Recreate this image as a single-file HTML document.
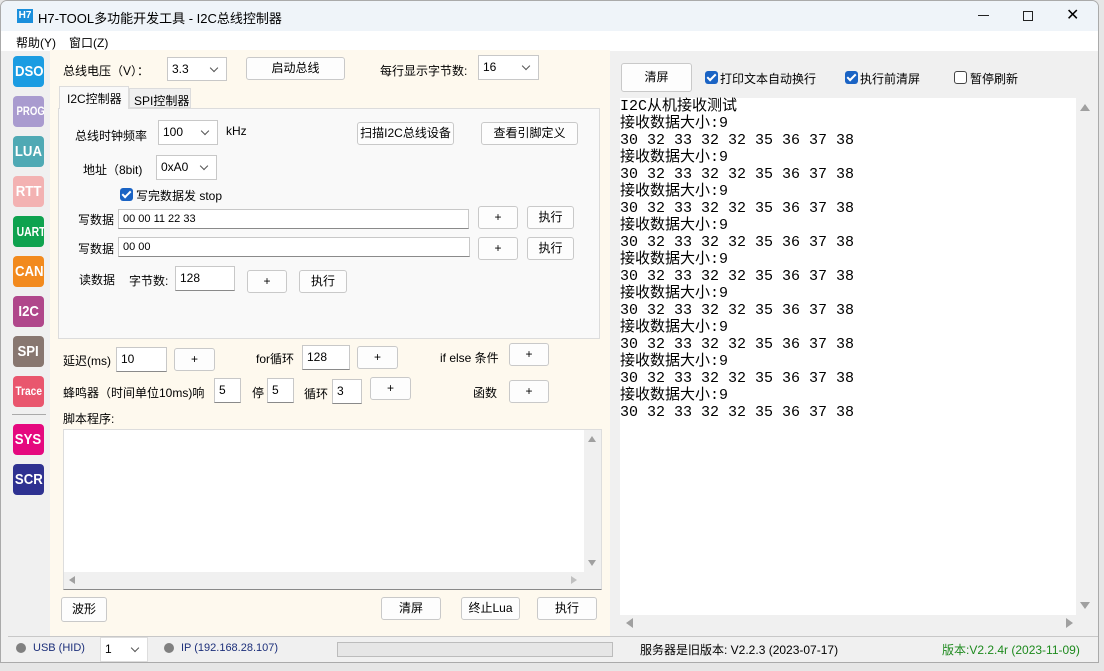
<!DOCTYPE html>
<html><head><meta charset="utf-8"><style>
*{box-sizing:border-box;margin:0;padding:0}
body{width:1104px;height:671px;background:#e6e6e6;font-family:"Liberation Sans","Noto Sans CJK SC",sans-serif;font-size:12px;color:#000;position:relative;overflow:hidden}
.a{position:absolute}
.btn{position:absolute;background:#fdfdfd;border:1px solid #c9c9c9;border-radius:3px;text-align:center;font-size:12px}
.inp{position:absolute;background:#fff;border:1px solid #c8c8c8;border-bottom:1px solid #8a8a8a;padding-left:4px;font-size:12px}
.cb{position:absolute;background:#fff;border:1px solid #c8c8c8;padding-left:4px;font-size:12px}
.cb:after{content:"";position:absolute;right:9px;top:7px;width:5px;height:5px;border-right:1px solid #555;border-bottom:1px solid #555;transform:rotate(45deg)}
.ic{position:absolute;left:13px;width:31px;height:31px;border-radius:4px;color:#fff;font-weight:bold;text-align:center;line-height:31px;font-size:15px;font-family:"Liberation Sans Narrow","Liberation Sans",sans-serif;overflow:hidden}
.ic span{display:inline-block;transform:scaleX(0.88)}
.chk{position:absolute;width:13px;height:13px;border-radius:3px;background:#1a63c4}
.chk:after{content:"";position:absolute;left:4px;top:1px;width:3px;height:7px;border-right:2px solid #fff;border-bottom:2px solid #fff;transform:rotate(45deg)}
.out{position:absolute;left:620px;top:98px;font-family:"Liberation Mono","Noto Sans CJK SC",monospace;font-size:15px;line-height:17px;white-space:pre}
</style></head><body>
<div class="a" style="left:0;top:0;width:1099px;height:663px;background:#f0f0f0;border:1px solid #aaa;border-radius:7px 7px 0 0;overflow:hidden">
 <div class="a" style="left:0;top:0;width:1099px;height:30px;background:#eff4f9"></div>
 <div class="a" style="left:16px;top:8px;width:16px;height:14px;background:#1a8fdc;color:#fff;font-size:10px;font-weight:bold;line-height:14px;text-align:center">H7</div>
 <div class="a" style="left:37px;top:7px;font-size:13px">H7-TOOL多功能开发工具 - I2C总线控制器</div>
 <div class="a" style="left:977px;top:14px;width:11px;height:1px;background:#222"></div>
 <div class="a" style="left:1022px;top:10px;width:10px;height:10px;border:1px solid #222"></div>
 <div class="a" style="left:1065px;top:8px;font-size:16px;line-height:14px">✕</div>
 <div class="a" style="left:0;top:30px;width:1099px;height:20px;background:#fff"></div>
 <div class="a" style="left:15px;top:33px">帮助(Y)</div>
 <div class="a" style="left:68px;top:33px">窗口(Z)</div>
</div>
<div class="ic" style="top:56px;background:#1b9ce2"><span>DSO</span></div>
<div class="ic" style="top:96px;background:#a99bcf;font-size:12px"><span style="transform:scaleX(0.8)">PROG</span></div>
<div class="ic" style="top:136px;background:#4fa9b4"><span>LUA</span></div>
<div class="ic" style="top:176px;background:#f3b2b2"><span>RTT</span></div>
<div class="ic" style="top:216px;background:#0ea24f;font-size:13px"><span style="transform:scaleX(0.8)">UART</span></div>
<div class="ic" style="top:256px;background:#f28a1e"><span>CAN</span></div>
<div class="ic" style="top:296px;background:#b0478b"><span>I2C</span></div>
<div class="ic" style="top:336px;background:#887770"><span>SPI</span></div>
<div class="ic" style="top:376px;background:#e9566e;font-size:12px"><span style="transform:scaleX(0.85)">Trace</span></div>
<div class="a" style="left:12px;top:414px;width:34px;height:1px;background:#aaa"></div>
<div class="ic" style="top:424px;background:#e5087f"><span>SYS</span></div>
<div class="ic" style="top:464px;background:#2e3191"><span>SCR</span></div>
<div class="a" style="left:50px;top:50px;width:560px;height:586px;background:#fef9ee"></div>
<div class="a" style="left:63px;top:62px">总线电压（V）：</div>
<div class="cb" style="left:167px;top:57px;width:60px;height:24px;line-height:22px">3.3</div>
<div class="btn" style="left:246px;top:57px;width:99px;height:23px;line-height:21px">启动总线</div>
<div class="a" style="left:380px;top:62px">每行显示字节数:</div>
<div class="cb" style="left:478px;top:55px;width:61px;height:25px;line-height:23px">16</div>
<div class="a" style="left:58px;top:108px;width:542px;height:231px;background:#f9f9f9;border:1px solid #dcdcdc"></div>
<div class="a" style="left:59px;top:86px;width:70px;height:23px;background:#f9f9f9;border:1px solid #dcdcdc;border-bottom:none;padding:3px 0 0 7px">I2C控制器</div>
<div class="a" style="left:129px;top:88px;width:62px;height:20px;background:#f0f0f0;border:1px solid #dcdcdc;padding:3px 0 0 4px">SPI控制器</div>
<div class="a" style="left:75px;top:127px">总线时钟频率</div>
<div class="cb" style="left:158px;top:120px;width:60px;height:25px;line-height:23px">100</div>
<div class="a" style="left:226px;top:124px">kHz</div>
<div class="btn" style="left:357px;top:122px;width:97px;height:23px;line-height:21px">扫描I2C总线设备</div>
<div class="btn" style="left:481px;top:122px;width:97px;height:23px;line-height:21px">查看引脚定义</div>
<div class="a" style="left:83px;top:161px">地址（8bit)</div>
<div class="cb" style="left:156px;top:155px;width:61px;height:25px;line-height:23px">0xA0</div>
<div class="chk" style="left:120px;top:188px"></div>
<div class="a" style="left:136px;top:187px">写完数据发 stop</div>
<div class="a" style="left:78px;top:211px">写数据</div>
<div class="inp" style="left:118px;top:209px;width:351px;height:20px;line-height:18px;font-size:11px">00 00 11 22 33</div>
<div class="btn" style="left:478px;top:206px;width:40px;height:23px;line-height:21px">+</div>
<div class="btn" style="left:527px;top:206px;width:47px;height:23px;line-height:21px">执行</div>
<div class="a" style="left:78px;top:240px">写数据</div>
<div class="inp" style="left:118px;top:237px;width:352px;height:20px;line-height:18px;font-size:11px">00 00</div>
<div class="btn" style="left:478px;top:237px;width:40px;height:23px;line-height:21px">+</div>
<div class="btn" style="left:527px;top:237px;width:47px;height:23px;line-height:21px">执行</div>
<div class="a" style="left:79px;top:271px">读数据</div>
<div class="a" style="left:129px;top:272px">字节数:</div>
<div class="inp" style="left:175px;top:266px;width:60px;height:25px;line-height:22px">128</div>
<div class="btn" style="left:247px;top:270px;width:40px;height:23px;line-height:21px">+</div>
<div class="btn" style="left:299px;top:270px;width:48px;height:23px;line-height:21px">执行</div>
<div class="a" style="left:63px;top:352px">延迟(ms)</div>
<div class="inp" style="left:116px;top:347px;width:51px;height:25px;line-height:22px">10</div>
<div class="btn" style="left:174px;top:348px;width:41px;height:23px;line-height:21px">+</div>
<div class="a" style="left:256px;top:350px">for循环</div>
<div class="inp" style="left:302px;top:345px;width:48px;height:25px;line-height:22px">128</div>
<div class="btn" style="left:357px;top:346px;width:41px;height:23px;line-height:21px">+</div>
<div class="a" style="left:440px;top:349px">if else 条件</div>
<div class="btn" style="left:509px;top:343px;width:40px;height:23px;line-height:21px">+</div>
<div class="a" style="left:63px;top:384px">蜂鸣器（时间单位10ms)响</div>
<div class="inp" style="left:214px;top:378px;width:27px;height:25px;line-height:22px">5</div>
<div class="a" style="left:252px;top:384px">停</div>
<div class="inp" style="left:267px;top:378px;width:27px;height:25px;line-height:22px">5</div>
<div class="a" style="left:304px;top:385px">循环</div>
<div class="inp" style="left:332px;top:379px;width:30px;height:25px;line-height:22px">3</div>
<div class="btn" style="left:370px;top:377px;width:41px;height:23px;line-height:21px">+</div>
<div class="a" style="left:473px;top:384px">函数</div>
<div class="btn" style="left:509px;top:380px;width:40px;height:23px;line-height:21px">+</div>
<div class="a" style="left:63px;top:410px">脚本程序:</div>
<div class="a" style="left:63px;top:429px;width:539px;height:161px;background:#fff;border:1px solid #ddd;border-bottom:1px solid #888">
 <div class="a" style="right:0;top:0;width:17px;height:142px;background:#f0f0f0"></div>
 <div class="a" style="left:0;bottom:0;width:537px;height:17px;background:#f0f0f0"></div>
 <div class="a" style="right:5px;top:6px;width:0;height:0;border:4px solid transparent;border-bottom:6px solid #a0a0a0;border-top:none"></div>
 <div class="a" style="right:5px;top:130px;width:0;height:0;border:4px solid transparent;border-top:6px solid #a0a0a0;border-bottom:none"></div>
 <div class="a" style="left:5px;bottom:5px;width:0;height:0;border:4px solid transparent;border-right:6px solid #a0a0a0;border-left:none"></div>
 <div class="a" style="right:24px;bottom:5px;width:0;height:0;border:4px solid transparent;border-left:6px solid #c0c0c0;border-right:none"></div>
</div>
<div class="btn" style="left:61px;top:597px;width:46px;height:25px;line-height:23px">波形</div>
<div class="btn" style="left:381px;top:597px;width:60px;height:23px;line-height:21px">清屏</div>
<div class="btn" style="left:461px;top:597px;width:59px;height:23px;line-height:21px">终止Lua</div>
<div class="btn" style="left:537px;top:597px;width:60px;height:23px;line-height:21px">执行</div>
<div class="btn" style="left:621px;top:63px;width:71px;height:29px;line-height:27px">清屏</div>
<div class="chk" style="left:705px;top:71px"></div>
<div class="a" style="left:720px;top:70px">打印文本自动换行</div>
<div class="chk" style="left:845px;top:71px"></div>
<div class="a" style="left:860px;top:70px">执行前清屏</div>
<div class="a" style="left:954px;top:71px;width:13px;height:13px;border:1px solid #444;border-radius:3px;background:#fff"></div>
<div class="a" style="left:970px;top:70px">暂停刷新</div>
<div class="a" style="left:620px;top:98px;width:456px;height:517px;background:#fff"></div>
<div class="a" style="left:1080px;top:104px;width:0;height:0;border:5px solid transparent;border-bottom:7px solid #a0a0a0;border-top:none"></div>
<div class="a" style="left:1080px;top:602px;width:0;height:0;border:5px solid transparent;border-top:7px solid #a0a0a0;border-bottom:none"></div>
<div class="a" style="left:626px;top:618px;width:0;height:0;border:5px solid transparent;border-right:7px solid #a0a0a0;border-left:none"></div>
<div class="a" style="left:1066px;top:618px;width:0;height:0;border:5px solid transparent;border-left:7px solid #a0a0a0;border-right:none"></div>
<div class="out">I2C从机接收测试
接收数据大小:9
30 32 33 32 32 35 36 37 38
接收数据大小:9
30 32 33 32 32 35 36 37 38
接收数据大小:9
30 32 33 32 32 35 36 37 38
接收数据大小:9
30 32 33 32 32 35 36 37 38
接收数据大小:9
30 32 33 32 32 35 36 37 38
接收数据大小:9
30 32 33 32 32 35 36 37 38
接收数据大小:9
30 32 33 32 32 35 36 37 38
接收数据大小:9
30 32 33 32 32 35 36 37 38
接收数据大小:9
30 32 33 32 32 35 36 37 38</div>
<div class="a" style="left:8px;top:636px;width:1090px;height:1px;background:#c8c8c8"></div>
<div class="a" style="left:16px;top:643px;width:10px;height:10px;border-radius:50%;background:#808080"></div>
<div class="a" style="left:33px;top:642px;font-size:11px;color:#1c2f7a">USB (HID)</div>
<div class="cb" style="left:100px;top:637px;width:48px;height:25px;line-height:23px;border-color:#ddd">1</div>
<div class="a" style="left:164px;top:643px;width:10px;height:10px;border-radius:50%;background:#808080"></div>
<div class="a" style="left:181px;top:642px;font-size:11px;color:#1c2f7a">IP (192.168.28.107)</div>
<div class="a" style="left:337px;top:642px;width:276px;height:15px;background:#e6e6e6;border:1px solid #bcbcbc"></div>
<div class="a" style="left:640px;top:641px">服务器是旧版本: V2.2.3 (2023-07-17)</div>
<div class="a" style="left:942px;top:641px;color:#1e8a1e">版本:V2.2.4r (2023-11-09)</div>
</body></html>
